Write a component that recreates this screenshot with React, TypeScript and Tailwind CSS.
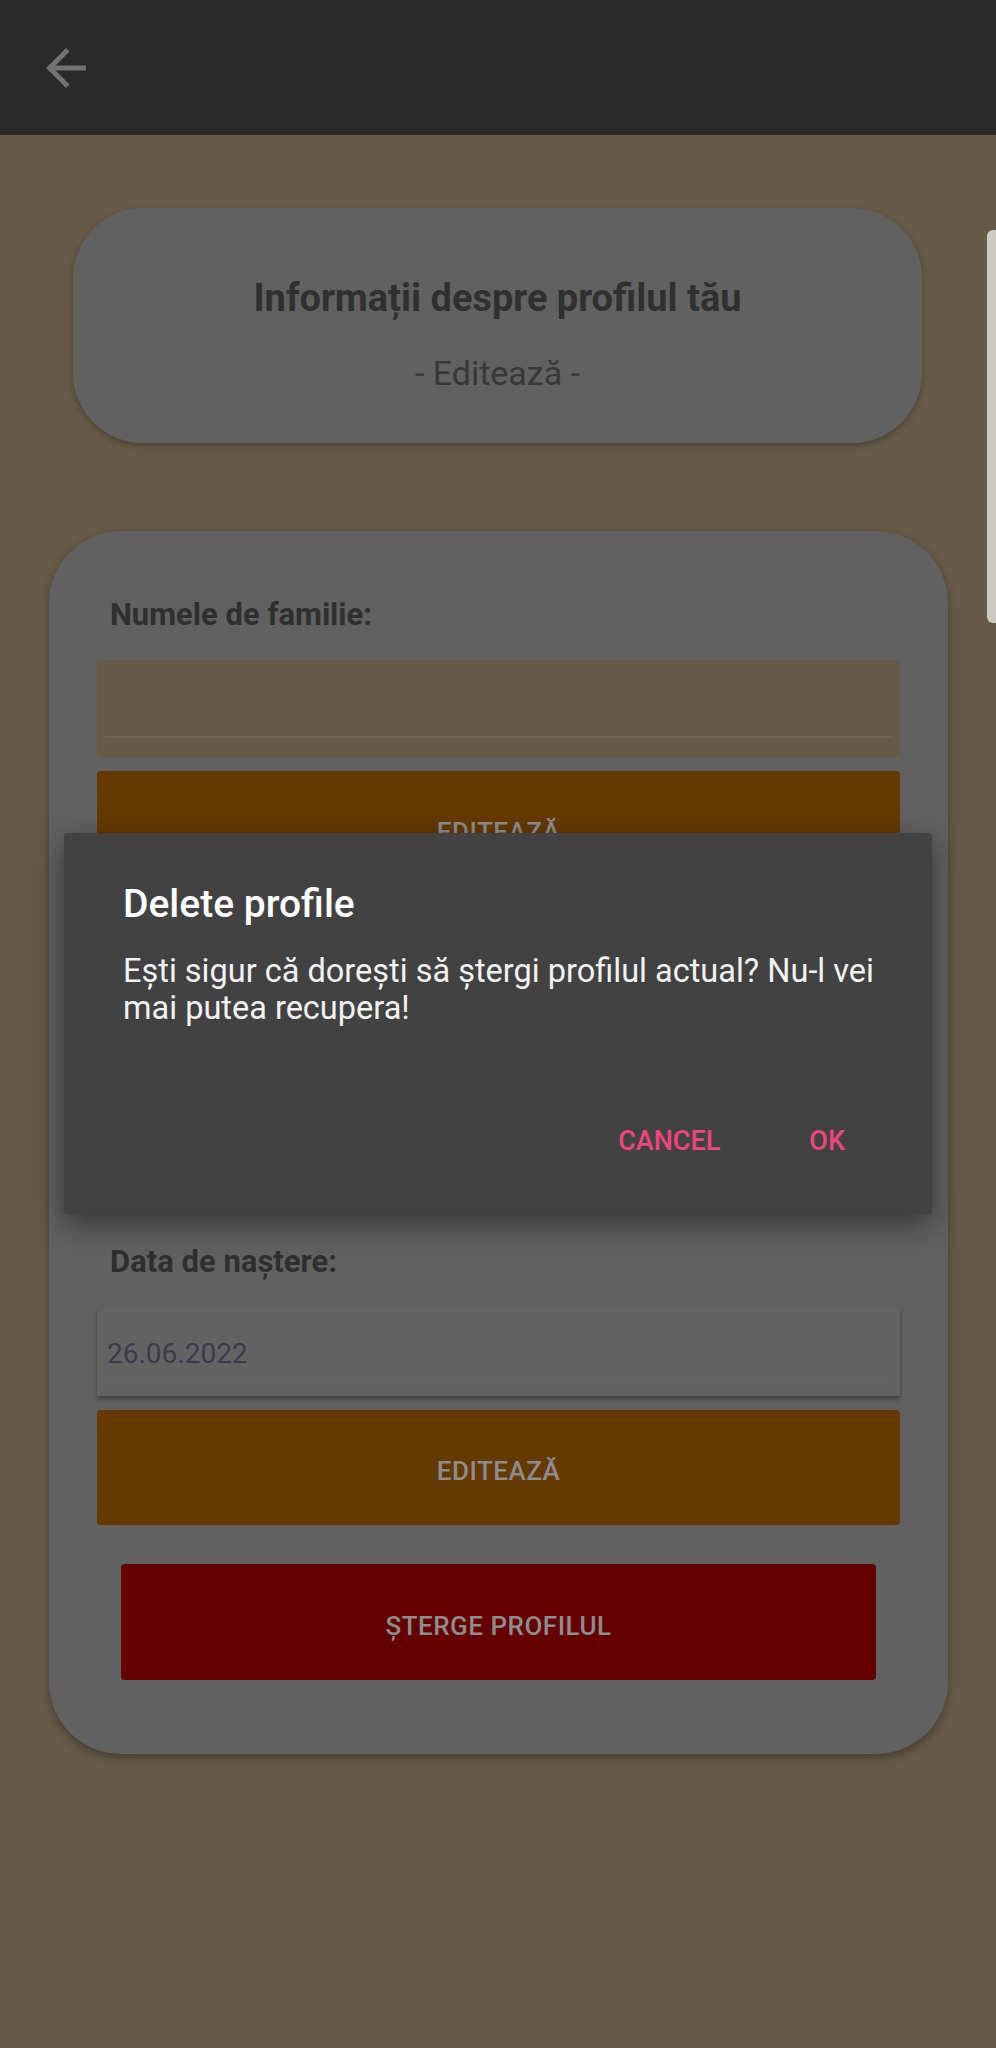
import React from "react";

function BackArrow() {
  return (
    <svg viewBox="4 4 16 16" className="w-[40px] h-[40px]" fill="#727272">
      <path d="M20 11H7.83l5.59-5.59L12 4l-8 8 8 8 1.41-1.41L7.83 13H20v-2z" />
    </svg>
  );
}

function FieldLabel({ children }: { children: React.ReactNode }) {
  return (
    <div className="ml-[13px] text-[31px] leading-[30px] font-bold text-[#2f2f2f]">
      {children}
    </div>
  );
}

function EditButton() {
  return (
    <div className="mt-[14px] h-[115px] shrink-0 rounded-[4px] bg-[#663900] flex items-center justify-center pt-[8px] text-[26px] font-medium text-[#8d8d8d] tracking-[0.5px]">
      EDITEAZĂ
    </div>
  );
}

export default function App() {
  return (
    <div
      className="relative w-[996px] h-[2048px] overflow-hidden bg-[#675a46]"
      style={{ fontFamily: "Roboto, 'Noto Sans', sans-serif" }}
    >
      {/* Toolbar */}
      <header className="h-[135px] bg-[#2a2a2a] flex items-center pl-[46px]">
        <BackArrow />
      </header>

      {/* Title card */}
      <div className="mt-[73px] ml-[73px] w-[849px] h-[235px] rounded-[70px] bg-[#616161] shadow-[0_3px_6px_rgba(0,0,0,0.25)] flex flex-col items-center pt-[71px]">
        <div className="text-[38px] leading-[38px] font-bold text-[#303030]">
          Informații despre profilul tău
        </div>
        <div className="mt-[39px] text-[34px] leading-[34px] text-[#383838]">
          - Editează -
        </div>
      </div>

      {/* Form card */}
      <div className="mt-[88px] ml-[49px] w-[899px] h-[1223px] rounded-[72px] bg-[#616161] shadow-[0_4px_8px_rgba(0,0,0,0.3)] px-[48px] pt-[69px] flex flex-col">
        <FieldLabel>Numele de familie:</FieldLabel>
        <div className="mt-[30px] h-[97px] shrink-0 rounded-[3px] bg-[#675a46] px-[8px] pt-[76px]">
          <div className="h-[2px] bg-[#6e6458]" />
        </div>
        <EditButton />

        {/* second field group, hidden under the dialog */}
        <div className="h-[361px] shrink-0" />

        <FieldLabel>Data de naștere:</FieldLabel>
        <div className="mt-[31px] h-[88px] shrink-0 bg-[#636363] shadow-[0_3px_4px_rgba(0,0,0,0.35)] px-[10px] flex flex-col">
          <div className="pt-[32px] text-[28px] leading-[28px] text-[#3b3b4d]">26.06.2022</div>
          <div className="mt-[14px] h-[1px] bg-[#666666]" />
        </div>
        <EditButton />

        <div className="mt-[39px] mx-[24px] h-[116px] shrink-0 rounded-[4px] bg-[#650000] flex items-center justify-center pt-[8px] text-[26px] font-medium text-[#8d8d8d] tracking-[0.5px]">
          ȘTERGE PROFILUL
        </div>
      </div>

      {/* Scroll edge */}
      <div className="absolute right-0 top-[230px] w-[9px] h-[393px] rounded-l-[6px] bg-[#cdc9c3]" />

      {/* Dialog */}
      <div className="absolute left-[64px] top-[833px] w-[868px] h-[381px] rounded-[3px] bg-[#424242] shadow-[0_10px_30px_rgba(0,0,0,0.45)] flex flex-col pt-[52px] pl-[59px] pr-[36px] pb-[59px]">
        <div className="text-[39px] leading-[38px] font-medium text-white">Delete profile</div>
        <div className="mt-[30px] text-[32.5px] leading-[37px] text-[#f2f2f2]">
          Ești sigur că dorești să ștergi profilul actual? Nu-l vei mai putea recupera!
        </div>
        <div className="flex-1" />
        <div className="flex justify-end items-center pr-[51px] text-[27px] leading-[27px] font-medium text-[#f0457f]">
          <span>CANCEL</span>
          <span className="ml-[89px]">OK</span>
        </div>
      </div>
    </div>
  );
}
